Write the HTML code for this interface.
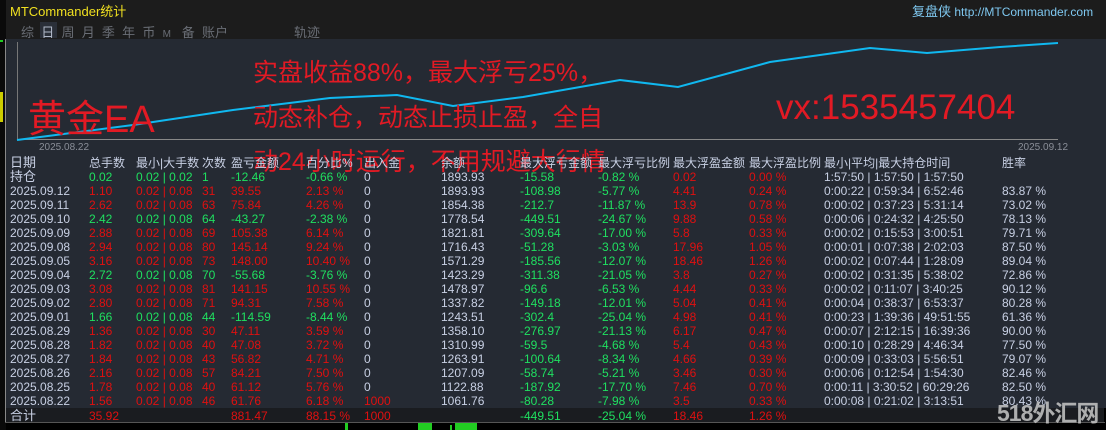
<!DOCTYPE html>
<html><head><meta charset="utf-8"><style>
*{margin:0;padding:0;box-sizing:border-box}
body{width:1106px;height:430px;background:#000;position:relative;overflow:hidden;font-family:"Liberation Sans","Noto Sans CJK SC",sans-serif;font-size:12px}
.a{position:absolute;white-space:nowrap}
.r{position:absolute;left:0;height:14px;width:1106px;line-height:14px}
.r span{position:absolute;top:0;white-space:nowrap}
.g{color:#1fe060}.d{color:#e01010}.w{color:#c8d0e4}
.c1{left:10px}.c2{left:89px}.c3{left:136px}.c4{left:202px}.c5{left:231px}.c6{left:306px}.c7{left:364px}.c8{left:441px}.c9{left:520px}.c10{left:598px}.c11{left:673px}.c12{left:749px}.c13{left:824px}.c14{left:1002px}
.big{position:absolute;color:#e21a24;white-space:nowrap;font-family:"Liberation Sans","Noto Sans CJK SC",sans-serif}
</style></head><body>
<div class="a" style="left:0;top:0;width:6px;height:430px;background:#0a0a0a"></div>
<div class="a" style="left:0;top:40px;width:3px;height:2px;background:#2c2"></div>
<div class="a" style="left:0;top:92px;width:3px;height:30px;background:#cc0"></div>
<div class="a" style="left:6px;top:0;width:1100px;height:39px;background:#1c1c1c"></div>
<div class="a" style="left:10px;top:1px;color:#f0e020;font-size:13px">MTCommander统计</div>
<div class="a" style="left:912px;top:1px;color:#7fc8f0;font-size:12px"><span style="font-size:13px">复盘侠</span> http://MTCommander.com</div>
<div class="a" style="left:40px;top:22px;width:17px;height:16px;background:#2a2f38"></div>
<div class="a" style="left:21px;top:22px;color:#6a6e76;font-size:13px;word-spacing:0">综&nbsp;&nbsp;<span style="color:#b0b8c8">日</span>&nbsp;&nbsp;周&nbsp;&nbsp;月&nbsp;&nbsp;季&nbsp;&nbsp;年&nbsp;&nbsp;币&nbsp;&nbsp;<span style="font-size:10px">M</span>&nbsp;&nbsp;&nbsp;备&nbsp;&nbsp;账户</div>
<div class="a" style="left:294px;top:22px;color:#6a6e76;font-size:13px">轨迹</div>
<div class="a" style="left:6px;top:39px;width:1100px;height:369px;background:#252a33"></div>
<div class="a" style="left:6px;top:408px;width:1098px;height:15px;background:#1a1c20"></div>
<div class="a" style="left:5px;top:39px;width:1px;height:384px;background:#888"></div>
<div class="a" style="left:5px;top:422px;width:1100px;height:1px;background:#555"></div>
<div class="a" style="left:17px;top:42px;width:1px;height:98px;background:#777"></div>
<div class="a" style="left:17px;top:139px;width:1041px;height:1px;background:#888"></div>
<svg class="a" style="left:0;top:0" width="1106" height="150">
<polyline fill="none" stroke="#10b8f0" stroke-width="2" points="17,140 133,125 233,110 330,98 397,95 453,106 523,97 620,80 678,87 770,62 870,48 927,53 1000,47 1058,43"/>
</svg>
<div class="a" style="left:39px;top:142px;color:#8a8e98;font-size:10px">2025.08.22</div>
<div class="a" style="left:1018px;top:142px;color:#8a8e98;font-size:10px">2025.09.12</div>
<div class="big" style="left:28px;top:88px;font-size:38px">黄金EA</div>
<div class="big" style="left:253px;top:53px;font-size:25px">实盘收益88%，最大浮亏25%，</div>
<div class="big" style="left:253px;top:98px;font-size:25px">动态补仓，动态止损止盈，全自</div>
<div class="big" style="left:253px;top:142px;font-size:25px">动24小时运行，不用规避大行情</div>
<div class="big" style="left:776px;top:88px;font-size:35px">vx:1535457404</div>

<div class="r w" style="top:156px"><span class="c1" style="font-size:13px">日期</span><span class="c2">总手数</span><span class="c3">最小|大手数</span><span class="c4">次数</span><span class="c5">盈亏金额</span><span class="c6">百分比%</span><span class="c7">出入金</span><span class="c8">余额</span><span class="c9">最大浮亏金额</span><span class="c10">最大浮亏比例</span><span class="c11">最大浮盈金额</span><span class="c12">最大浮盈比例</span><span class="c13">最小|平均|最大持仓时间</span><span class="c14">胜率</span></div>
<div class="r" style="top:170px"><span class="c1 w" style="font-size:13px">持仓</span><span class="c2 g">0.02</span><span class="c3 g">0.02 | 0.02</span><span class="c4 g">1</span><span class="c5 g">-12.46</span><span class="c6 g">-0.66 %</span><span class="c7 w">0</span><span class="c8 w">1893.93</span><span class="c9 g">-15.58</span><span class="c10 g">-0.82 %</span><span class="c11 d">0.02</span><span class="c12 d">0.00 %</span><span class="c13 w">1:57:50 | 1:57:50 | 1:57:50</span></div>
<div class="r" style="top:184px"><span class="c1 w">2025.09.12</span><span class="c2 d">1.10</span><span class="c3 d">0.02 | 0.08</span><span class="c4 d">31</span><span class="c5 d">39.55</span><span class="c6 d">2.13 %</span><span class="c7 w">0</span><span class="c8 w">1893.93</span><span class="c9 g">-108.98</span><span class="c10 g">-5.77 %</span><span class="c11 d">4.41</span><span class="c12 d">0.24 %</span><span class="c13 w">0:00:22 | 0:59:34 | 6:52:46</span><span class="c14 w">83.87 %</span></div>
<div class="r" style="top:198px"><span class="c1 w">2025.09.11</span><span class="c2 d">2.62</span><span class="c3 d">0.02 | 0.08</span><span class="c4 d">63</span><span class="c5 d">75.84</span><span class="c6 d">4.26 %</span><span class="c7 w">0</span><span class="c8 w">1854.38</span><span class="c9 g">-212.7</span><span class="c10 g">-11.87 %</span><span class="c11 d">13.9</span><span class="c12 d">0.78 %</span><span class="c13 w">0:00:02 | 0:37:23 | 5:31:14</span><span class="c14 w">73.02 %</span></div>
<div class="r" style="top:212px"><span class="c1 w">2025.09.10</span><span class="c2 g">2.42</span><span class="c3 g">0.02 | 0.08</span><span class="c4 g">64</span><span class="c5 g">-43.27</span><span class="c6 g">-2.38 %</span><span class="c7 w">0</span><span class="c8 w">1778.54</span><span class="c9 g">-449.51</span><span class="c10 g">-24.67 %</span><span class="c11 d">9.88</span><span class="c12 d">0.58 %</span><span class="c13 w">0:00:06 | 0:24:32 | 4:25:50</span><span class="c14 w">78.13 %</span></div>
<div class="r" style="top:226px"><span class="c1 w">2025.09.09</span><span class="c2 d">2.88</span><span class="c3 d">0.02 | 0.08</span><span class="c4 d">69</span><span class="c5 d">105.38</span><span class="c6 d">6.14 %</span><span class="c7 w">0</span><span class="c8 w">1821.81</span><span class="c9 g">-309.64</span><span class="c10 g">-17.00 %</span><span class="c11 d">5.8</span><span class="c12 d">0.33 %</span><span class="c13 w">0:00:02 | 0:15:53 | 3:00:51</span><span class="c14 w">79.71 %</span></div>
<div class="r" style="top:240px"><span class="c1 w">2025.09.08</span><span class="c2 d">2.94</span><span class="c3 d">0.02 | 0.08</span><span class="c4 d">80</span><span class="c5 d">145.14</span><span class="c6 d">9.24 %</span><span class="c7 w">0</span><span class="c8 w">1716.43</span><span class="c9 g">-51.28</span><span class="c10 g">-3.03 %</span><span class="c11 d">17.96</span><span class="c12 d">1.05 %</span><span class="c13 w">0:00:01 | 0:07:38 | 2:02:03</span><span class="c14 w">87.50 %</span></div>
<div class="r" style="top:254px"><span class="c1 w">2025.09.05</span><span class="c2 d">3.16</span><span class="c3 d">0.02 | 0.08</span><span class="c4 d">73</span><span class="c5 d">148.00</span><span class="c6 d">10.40 %</span><span class="c7 w">0</span><span class="c8 w">1571.29</span><span class="c9 g">-185.56</span><span class="c10 g">-12.07 %</span><span class="c11 d">18.46</span><span class="c12 d">1.26 %</span><span class="c13 w">0:00:02 | 0:07:44 | 1:28:09</span><span class="c14 w">89.04 %</span></div>
<div class="r" style="top:268px"><span class="c1 w">2025.09.04</span><span class="c2 g">2.72</span><span class="c3 g">0.02 | 0.08</span><span class="c4 g">70</span><span class="c5 g">-55.68</span><span class="c6 g">-3.76 %</span><span class="c7 w">0</span><span class="c8 w">1423.29</span><span class="c9 g">-311.38</span><span class="c10 g">-21.05 %</span><span class="c11 d">3.8</span><span class="c12 d">0.27 %</span><span class="c13 w">0:00:02 | 0:31:35 | 5:38:02</span><span class="c14 w">72.86 %</span></div>
<div class="r" style="top:282px"><span class="c1 w">2025.09.03</span><span class="c2 d">3.08</span><span class="c3 d">0.02 | 0.08</span><span class="c4 d">81</span><span class="c5 d">141.15</span><span class="c6 d">10.55 %</span><span class="c7 w">0</span><span class="c8 w">1478.97</span><span class="c9 g">-96.6</span><span class="c10 g">-6.53 %</span><span class="c11 d">4.44</span><span class="c12 d">0.33 %</span><span class="c13 w">0:00:02 | 0:11:07 | 3:40:25</span><span class="c14 w">90.12 %</span></div>
<div class="r" style="top:296px"><span class="c1 w">2025.09.02</span><span class="c2 d">2.80</span><span class="c3 d">0.02 | 0.08</span><span class="c4 d">71</span><span class="c5 d">94.31</span><span class="c6 d">7.58 %</span><span class="c7 w">0</span><span class="c8 w">1337.82</span><span class="c9 g">-149.18</span><span class="c10 g">-12.01 %</span><span class="c11 d">5.04</span><span class="c12 d">0.41 %</span><span class="c13 w">0:00:04 | 0:38:37 | 6:53:37</span><span class="c14 w">80.28 %</span></div>
<div class="r" style="top:310px"><span class="c1 w">2025.09.01</span><span class="c2 g">1.66</span><span class="c3 g">0.02 | 0.08</span><span class="c4 g">44</span><span class="c5 g">-114.59</span><span class="c6 g">-8.44 %</span><span class="c7 w">0</span><span class="c8 w">1243.51</span><span class="c9 g">-302.4</span><span class="c10 g">-25.04 %</span><span class="c11 d">4.98</span><span class="c12 d">0.41 %</span><span class="c13 w">0:00:23 | 1:39:36 | 49:51:55</span><span class="c14 w">61.36 %</span></div>
<div class="r" style="top:324px"><span class="c1 w">2025.08.29</span><span class="c2 d">1.36</span><span class="c3 d">0.02 | 0.08</span><span class="c4 d">30</span><span class="c5 d">47.11</span><span class="c6 d">3.59 %</span><span class="c7 w">0</span><span class="c8 w">1358.10</span><span class="c9 g">-276.97</span><span class="c10 g">-21.13 %</span><span class="c11 d">6.17</span><span class="c12 d">0.47 %</span><span class="c13 w">0:00:07 | 2:12:15 | 16:39:36</span><span class="c14 w">90.00 %</span></div>
<div class="r" style="top:338px"><span class="c1 w">2025.08.28</span><span class="c2 d">1.82</span><span class="c3 d">0.02 | 0.08</span><span class="c4 d">40</span><span class="c5 d">47.08</span><span class="c6 d">3.72 %</span><span class="c7 w">0</span><span class="c8 w">1310.99</span><span class="c9 g">-59.5</span><span class="c10 g">-4.68 %</span><span class="c11 d">5.4</span><span class="c12 d">0.43 %</span><span class="c13 w">0:00:10 | 0:28:29 | 4:46:34</span><span class="c14 w">77.50 %</span></div>
<div class="r" style="top:352px"><span class="c1 w">2025.08.27</span><span class="c2 d">1.84</span><span class="c3 d">0.02 | 0.08</span><span class="c4 d">43</span><span class="c5 d">56.82</span><span class="c6 d">4.71 %</span><span class="c7 w">0</span><span class="c8 w">1263.91</span><span class="c9 g">-100.64</span><span class="c10 g">-8.34 %</span><span class="c11 d">4.66</span><span class="c12 d">0.39 %</span><span class="c13 w">0:00:09 | 0:33:03 | 5:56:51</span><span class="c14 w">79.07 %</span></div>
<div class="r" style="top:366px"><span class="c1 w">2025.08.26</span><span class="c2 d">2.16</span><span class="c3 d">0.02 | 0.08</span><span class="c4 d">57</span><span class="c5 d">84.21</span><span class="c6 d">7.50 %</span><span class="c7 w">0</span><span class="c8 w">1207.09</span><span class="c9 g">-58.74</span><span class="c10 g">-5.21 %</span><span class="c11 d">3.46</span><span class="c12 d">0.30 %</span><span class="c13 w">0:00:06 | 0:12:54 | 1:54:30</span><span class="c14 w">82.46 %</span></div>
<div class="r" style="top:380px"><span class="c1 w">2025.08.25</span><span class="c2 d">1.78</span><span class="c3 d">0.02 | 0.08</span><span class="c4 d">40</span><span class="c5 d">61.12</span><span class="c6 d">5.76 %</span><span class="c7 w">0</span><span class="c8 w">1122.88</span><span class="c9 g">-187.92</span><span class="c10 g">-17.70 %</span><span class="c11 d">7.46</span><span class="c12 d">0.70 %</span><span class="c13 w">0:00:11 | 3:30:52 | 60:29:26</span><span class="c14 w">82.50 %</span></div>
<div class="r" style="top:394px"><span class="c1 w">2025.08.22</span><span class="c2 d">1.56</span><span class="c3 d">0.02 | 0.08</span><span class="c4 d">46</span><span class="c5 d">61.76</span><span class="c6 d">6.18 %</span><span class="c7 d">1000</span><span class="c8 w">1061.76</span><span class="c9 g">-80.28</span><span class="c10 g">-7.98 %</span><span class="c11 d">3.5</span><span class="c12 d">0.33 %</span><span class="c13 w">0:00:08 | 0:21:02 | 3:13:51</span><span class="c14 w">80.43 %</span></div>
<div class="r" style="top:409px"><span class="c1 w" style="font-size:13px">合计</span><span class="c2 d">35.92</span><span class="c5 d">881.47</span><span class="c6 d">88.15 %</span><span class="c7 d">1000</span><span class="c9 g">-449.51</span><span class="c10 g">-25.04 %</span><span class="c11 d">18.46</span><span class="c12 d">1.26 %</span></div>
<div class="a" style="left:997px;top:394px;color:rgba(200,200,200,0.85);font-size:23px;font-weight:bold;letter-spacing:-1px">518外汇网</div>
<div class="a" style="left:345px;top:423px;width:3px;height:7px;background:#2c2"></div>
<div class="a" style="left:418px;top:423px;width:14px;height:7px;background:#2c2"></div>
<div class="a" style="left:450px;top:425px;width:2px;height:5px;background:#2c2"></div>
<div class="a" style="left:455px;top:423px;width:22px;height:7px;background:#2c2"></div>
</body></html>
